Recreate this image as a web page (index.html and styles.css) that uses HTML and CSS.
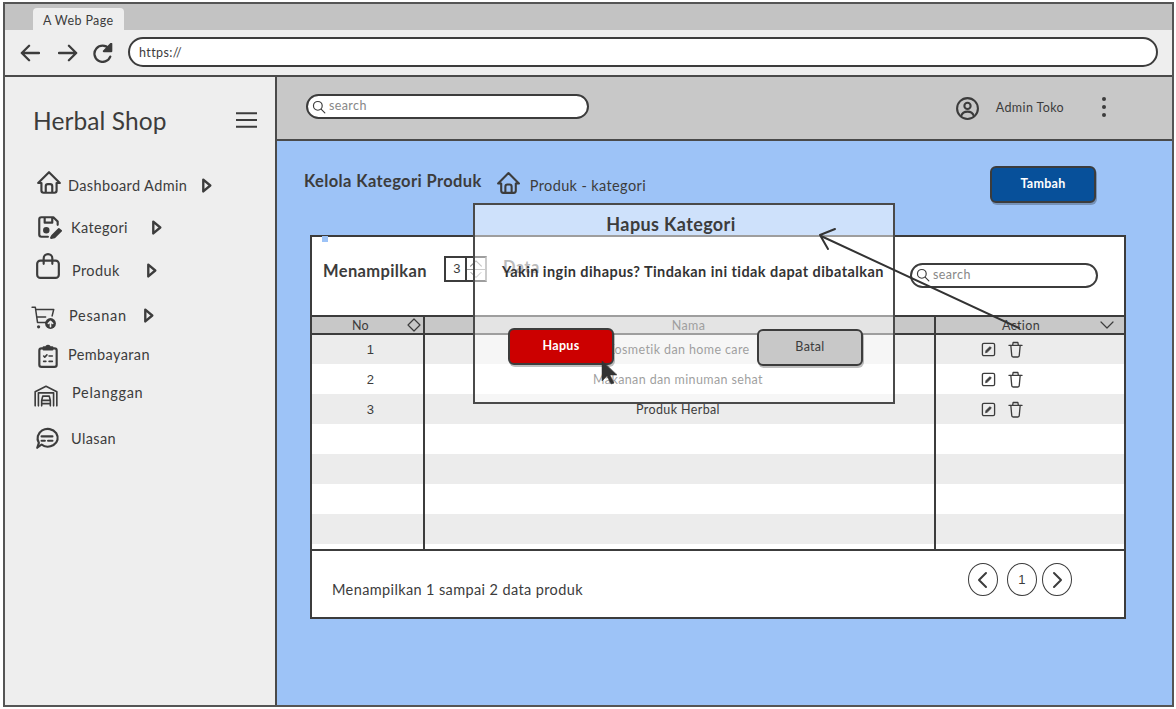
FILE: index.html
```html
<!DOCTYPE html>
<html lang="en">
<head>
  <meta charset="UTF-8">
  <meta name="viewport" content="width=device-width, initial-scale=1.0">
  <title>Herbal Shop - Kelola Kategori Produk</title>
  <link rel="stylesheet" href="styles.css">
</head>
<body>
  <svg class="sprite" xmlns="http://www.w3.org/2000/svg">
    <symbol id="i-home" viewBox="0 0 24 24"><path d="M5 12H2l10-10 10 10h-3M5 12v7a2 2 0 0 0 2 2h10a2 2 0 0 0 2-2v-7M9 21v-6a2 2 0 0 1 2-2h2a2 2 0 0 1 2 2v6"/></symbol>
    <symbol id="i-save" viewBox="0 0 24 24"><path d="M11 21H5a2 2 0 0 1-2-2V5a2 2 0 0 1 2-2h11l4 4v3M8 3v5h7V3"/><circle cx="9.500" cy="15" r="2" fill="currentColor"/><path d="M15 20l6-6 2 1.500-6 6-3 .5z" fill="currentColor"/></symbol>
    <symbol id="i-bag" viewBox="0 0 24 24"><path d="M5 7h14a3 3 0 0 1 3 3v10a3 3 0 0 1-3 3H5a3 3 0 0 1-3-3V10a3 3 0 0 1 3-3zM8 10V5a4 4 0 0 1 8 0v5"/></symbol>
    <symbol id="i-cart" viewBox="0 0 24 24"><path d="M1 3h3l2 14h8M4.500 5h16.500l-1.500 6M5.500 12h8" stroke-width="1.400"/><circle cx="7" cy="21" r="1.500" fill="currentColor" stroke="none"/><circle cx="18" cy="18" r="5" fill="currentColor" stroke="none"/><path d="M18 21v-5M16 18l2-2 2 2" stroke="#eee" stroke-width="1.500"/></symbol>
    <symbol id="i-clip" viewBox="0 0 24 24"><path d="M8 5H6a2 2 0 0 0-2 2v13a2 2 0 0 0 2 2h12a2 2 0 0 0 2-2V7a2 2 0 0 0-2-2h-2"/><path d="M8 6V4h2.500a1.500 1.500 0 0 1 3 0H16v2z" fill="currentColor"/><path d="M8 12l1 1 2-2M13 12h3M8 17h2M13 17h3" stroke-width="1.500"/></symbol>
    <symbol id="i-garage" viewBox="0 0 24 24"><path d="M2 22V9l10-5 10 5v13M5 22V10h14v12M8 22v-5l1-4h6l1 4v5M8 17h8M8 20h8" stroke-width="1.500"/></symbol>
    <symbol id="i-chat" viewBox="0 0 24 24"><path d="M3 21l1.500-4.500C2 12.500 3.500 7.500 7.500 5c4.500-2.500 10-1.500 13 2.500 2.500 4 1.500 8.500-2.500 11-3.500 2-8 2-11-.5z"/><path d="M7 10.500h10M7 14.500h3M13 14.500h4"/></symbol>
    <symbol id="i-search" viewBox="0 0 24 24"><circle cx="10" cy="10" r="7.500"/><path d="M16 16l6 6"/></symbol>
    <symbol id="i-user" viewBox="0 0 24 24"><circle cx="12" cy="12" r="10"/><circle cx="12" cy="9.500" r="3"/><path d="M6 19c1-3 3-4 6-4s5 1 6 4"/></symbol>
    <symbol id="i-edit" viewBox="0 0 16 16"><rect x="1.500" y="1.500" width="13" height="13" rx="1.500"/><path d="M5 11l.500-2 4-4 1.500 1.500-4 4z" fill="currentColor" stroke-width="1"/></symbol>
    <symbol id="i-trash" viewBox="0 0 16 18"><path d="M1 4.500h14M3 4.500l1 11a1.500 1.500 0 0 0 1.500 1.500h5a1.500 1.500 0 0 0 1.500-1.500l1-11M5 4l.500-2.500h5L11 4" stroke-width="1.400"/></symbol>
    <symbol id="i-play" viewBox="0 0 10 14"><path d="M2 1.500l6.500 5.500-6.500 5.500z" stroke-width="2.200"/></symbol>
  </svg>

  <div class="browser">
    <div class="tab-strip"><span class="tab">A Web Page</span></div>
    <div class="toolbar">
      <svg class="nav-ico" viewBox="0 0 22 22"><path d="M21 11H2M10 3l-8 8 8 8"/></svg>
      <svg class="nav-ico" viewBox="0 0 22 22"><path d="M1 11h19M12 3l8 8-8 8"/></svg>
      <svg class="nav-ico" viewBox="0 0 22 22"><path d="M19 15a9 9 0 1 1-1.500-9"/><path d="M20 1v8h-8z" fill="currentColor"/></svg>
      <div class="url">https://</div>
    </div>

    <div class="app">
      <aside class="sidebar">
        <div class="brand">
          <span>Herbal Shop</span>
          <svg class="burger" viewBox="0 0 22 18"><path d="M0 2h22M0 9h22M0 16h22"/></svg>
        </div>
        <nav class="menu">
          <a class="menu-item item-dash"><svg class="ico"><use href="#i-home"/></svg><span>Dashboard Admin</span><svg class="caret"><use href="#i-play"/></svg></a>
          <a class="menu-item item-kat"><svg class="ico"><use href="#i-save"/></svg><span>Kategori</span><svg class="caret"><use href="#i-play"/></svg></a>
          <a class="menu-item item-prod"><svg class="ico"><use href="#i-bag"/></svg><span>Produk</span><svg class="caret"><use href="#i-play"/></svg></a>
          <a class="menu-item item-pes"><svg class="ico"><use href="#i-cart"/></svg><span>Pesanan</span><svg class="caret"><use href="#i-play"/></svg></a>
          <a class="menu-item item-bayar"><svg class="ico"><use href="#i-clip"/></svg><span>Pembayaran</span></a>
          <a class="menu-item item-lgn"><svg class="ico"><use href="#i-garage"/></svg><span>Pelanggan</span></a>
          <a class="menu-item item-ulas"><svg class="ico"><use href="#i-chat"/></svg><span>Ulasan</span></a>
        </nav>
      </aside>

      <div class="main">
        <header class="topbar">
          <div class="search search-top"><svg class="search-ico"><use href="#i-search"/></svg><span>search</span></div>
          <div class="account">
            <svg class="user-ico"><use href="#i-user"/></svg>
            <span class="user-name">Admin Toko</span>
            <div class="dots"><i></i><i></i><i></i></div>
          </div>
        </header>

        <section class="content">
          <div class="page-head">
            <h1>Kelola Kategori Produk</h1>
            <svg class="crumb-ico"><use href="#i-home"/></svg>
            <span class="crumb">Produk - kategori</span>
            <button class="btn btn-add">Tambah</button>
          </div>

          <div class="card">
            <span class="handle"></span>
            <div class="card-top">
              <strong class="show-label">Menampilkan</strong>
              <div class="spinner">
                <span class="spin-val">3</span>
                <span class="spin-arrows">
                  <svg viewBox="0 0 20 12"><path d="M4 9l6-6 6 6"/></svg>
                  <svg viewBox="0 0 20 12"><path d="M4 3l6 6 6-6"/></svg>
                </span>
              </div>
              <strong class="data-label">Data</strong>
              <div class="search search-card"><svg class="search-ico"><use href="#i-search"/></svg><span>search</span></div>
            </div>

            <table class="grid">
              <colgroup><col class="col-no"><col><col class="col-act"></colgroup>
              <thead>
                <tr>
                  <th><span>No</span><svg class="sort" viewBox="0 0 14 14"><path d="M7 1l6 6-6 6-6-6z"/></svg></th>
                  <th class="th-name">Nama</th>
                  <th class="th-act"><span>Action</span><svg class="sort chev" viewBox="0 0 14 14"><path d="M1 4l6 6 6-6"/></svg></th>
                </tr>
              </thead>
              <tbody>
                <tr><td>1</td><td>Kosmetik dan home care</td><td><svg class="act-edit"><use href="#i-edit"/></svg><svg class="act-trash"><use href="#i-trash"/></svg></td></tr>
                <tr><td>2</td><td>Makanan dan minuman sehat</td><td><svg class="act-edit"><use href="#i-edit"/></svg><svg class="act-trash"><use href="#i-trash"/></svg></td></tr>
                <tr><td>3</td><td>Produk Herbal</td><td><svg class="act-edit"><use href="#i-edit"/></svg><svg class="act-trash"><use href="#i-trash"/></svg></td></tr>
                <tr><td></td><td></td><td></td></tr>
                <tr><td></td><td></td><td></td></tr>
                <tr><td></td><td></td><td></td></tr>
                <tr><td></td><td></td><td></td></tr>
                <tr class="row-tail"><td></td><td></td><td></td></tr>
              </tbody>
            </table>

            <div class="card-foot">
              <span>Menampilkan 1 sampai 2 data produk</span>
              <div class="pager">
                <span class="page-btn"><svg viewBox="0 0 14 18"><path d="M10 2L3 9l7 7"/></svg></span>
                <span class="page-btn page-num">1</span>
                <span class="page-btn"><svg viewBox="0 0 14 18"><path d="M4 2l7 7-7 7"/></svg></span>
              </div>
            </div>
          </div>
        </section>
      </div>
    </div>

    <div class="modal">
      <div class="modal-title">Hapus Kategori</div>
      <p class="modal-msg">Yakin ingin dihapus? Tindakan ini tidak dapat dibatalkan</p>
      <div class="modal-actions">
        <button class="btn btn-del">Hapus
          <svg class="cursor" viewBox="0 0 16 24"><path d="M1 0v20l5-5 4 8 3-1-4-8h7z"/></svg>
        </button>
        <button class="btn btn-cancel">Batal</button>
      </div>
    </div>

    <svg class="flow-arrow" viewBox="0 0 260 110"><path d="M204 102L6 10M20 3L5 9l8 14"/></svg>
  </div>
</body>
</html>
```

FILE: styles.css
```css
* { box-sizing: border-box; }
html, body { margin: 0; height: 100%; background: #fff; }
body {
  font-family: Lato, "Noto Sans", sans-serif;
  letter-spacing: .38px;
  color: #3c3c3c;
  padding: 2px 0 0 3px;
}
.sprite { width: 0; height: 0; position: absolute; }
svg { fill: none; stroke: currentColor; stroke-width: 2; stroke-linecap: round; stroke-linejoin: round; display: block; }

.browser {
  position: relative;
  width: 1171px; height: 705px;
  border: 2px solid #555;
  background: #eee;
  display: flex;
  flex-direction: column;
}

/* browser chrome */
.tab-strip {
  height: 26px;
  background: #c3c3c3;
  padding: 4px 0 0 28px;
}
.tab {
  display: block;
  width: 91px; height: 22px;
  background: #eee;
  border-radius: 4px 4px 0 0;
  font-size: 12.500px;
  line-height: 25px;
  padding-left: 10px;
}
.toolbar {
  height: 47px;
  border-bottom: 2px solid #4a4a4a;
  display: flex;
  align-items: center;
  padding: 0 14px 0 15px;
}
.nav-ico { width: 20px; height: 20px; margin-right: 18px; stroke-width: 2.500; }
.nav-ico:nth-child(2) { margin-right: 15px; }
.nav-ico:nth-child(3) { margin-right: 15px; }
.url {
  flex: 1;
  height: 30px;
  margin-bottom: 2px;
  background: #fff;
  border: 2px solid #3c3c3c;
  border-radius: 15px;
  font-size: 12.500px;
  line-height: 28px;
  padding-left: 9px;
}

.app { flex: 1; display: flex; min-height: 0; }

/* sidebar */
.sidebar {
  width: 272px;
  border-right: 2px solid #4a4a4a;
  padding: 0 18px 0 28px;
}
.brand {
  display: flex;
  align-items: center;
  justify-content: space-between;
  height: 60px;
  margin-top: 13px;
  font-size: 24.500px;
  letter-spacing: .1px;
}
.burger { width: 21px; height: 18px; }
.menu { margin-top: 22px; }
.menu-item { display: flex; align-items: center; font-size: 14.500px; height: 26px; }
.menu-item .ico { width: 26px; height: 26px; flex: none; }
.caret { width: 11px; height: 15px; margin-left: 14px; }
.item-dash { margin-left: 3px; }
.item-dash .ico { margin-bottom: 4px; }
.item-dash span { margin-left: 6px; }
.item-kat { margin: 16px 0 0 3px; }
.item-kat span { margin-left: 9px; }
.item-kat .caret { margin-left: 23px; }
.item-prod { margin: 17px 0 0 2px; }
.item-prod .ico { margin-bottom: 9px; }
.item-prod span { margin-left: 11px; }
.item-prod .caret { margin-left: 26px; }
.item-pes { margin: 19px 0 0 -2px; }
.item-pes .ico { margin-top: 4px; }
.item-pes span { margin-left: 12px; letter-spacing: .7px; }
.item-pes .caret { margin-left: 16px; }
.item-bayar { margin: 13px 0 0 2px; }
.item-bayar .ico { margin-top: 4px; }
.item-bayar span { margin-left: 7px; }
.item-lgn { margin: 12px 0 0 0; }
.item-lgn .ico { margin-top: 6px; }
.item-lgn span { margin-left: 13px; letter-spacing: .7px; }
.item-ulas { margin: 20px 0 0 1px; }
.item-ulas span { margin-left: 11px; }

/* top bar */
.main { flex: 1; display: flex; flex-direction: column; min-width: 0; }
.topbar {
  height: 64px;
  background: #c8c8c8;
  border-bottom: 2px solid #4a4a4a;
  display: flex;
  padding: 17px 0 0 29px;
}
.search {
  display: flex;
  align-items: center;
  background: #fff;
  border: 2px solid #3c3c3c;
  border-radius: 13px;
  font-size: 12.500px;
  color: #888;
  padding-left: 4px;
}
.search span { margin-bottom: 2px; }
.search-ico { width: 14px; height: 14px; color: #3c3c3c; margin-right: 3px; }
.search-top { width: 283px; height: 25px; }
.account { margin-left: auto; display: flex; align-items: center; height: 29px; padding-right: 66px; }
.user-ico { width: 25px; height: 25px; }
.user-name { font-size: 12.500px; margin: 0 38px 2px 16px; }
.dots { display: flex; flex-direction: column; gap: 4px; margin-bottom: 3px; }
.dots i { display: block; width: 4px; height: 4px; border-radius: 50%; background: #3c3c3c; }

/* content */
.content { flex: 1; background: #9dc3f7; padding: 25px 46px 0 27px; }
.page-head { display: flex; align-items: center; height: 37px; padding-right: 30px; }
.page-head h1 { margin: 0 14px 8px 0; font-size: 16.500px; font-weight: 700; }
.crumb-ico { width: 25px; height: 25px; margin: 0 9px 3px 0; }
.crumb { font-size: 14.500px; margin-top: 1px; }
.btn {
  display: block;
  width: 106px; height: 37px;
  border: 2px solid #3c3c3c;
  border-radius: 6px;
  font: 700 12.500px Lato, "Noto Sans", sans-serif;
  letter-spacing: .3px;
  box-shadow: 1px 2px 0 rgba(0, 0, 0, .25);
}
.btn-add { margin-left: auto; background: #07509a; color: #fff; padding-bottom: 3px; }

.card {
  position: relative;
  margin: 32px 0 0 6px;
  height: 384px;
  background: #fff;
  border: 2px solid #3c3c3c;
  display: flex;
  flex-direction: column;
}
.handle { position: absolute; left: 10px; top: -1px; width: 6px; height: 6px; background: #9dc3f7; }
.card-top { height: 78px; display: flex; align-items: center; padding: 0 26px 10px 11px; }
.show-label { font-size: 16.500px; margin-right: 17px; }
.spinner { display: flex; width: 43px; height: 26px; margin: 0 16px 4px 0; border: 2px solid #3c3c3c; border-right-color: #999; font: 13px "Liberation Sans", sans-serif; }
.spin-val { width: 21px; padding-left: 3px; text-align: center; line-height: 22px; border-right: 2px solid #3c3c3c; }
.spin-arrows { flex: 1; display: flex; flex-direction: column; color: #888; }
.spin-arrows svg { width: 100%; height: 11px; stroke-width: 1.200; }
.spin-arrows svg + svg { border-top: 1px solid #999; }
.data-label { font-size: 16.500px; color: #777; margin-bottom: 8px; }
.search-card { margin: 8px 0 0 auto; width: 188px; height: 25px; }

.grid { width: 100%; height: 233px; table-layout: fixed; border-collapse: collapse; border-bottom: 2px solid #3c3c3c; font-size: 12.500px; }
.col-no { width: 112px; }
.col-act { width: 189px; }
.grid th {
  position: relative;
  height: 18px;
  padding: 0;
  background: #c8c8c8;
  border-top: 2px solid #3c3c3c;
  border-bottom: 2px solid #3c3c3c;
  font-weight: 400;
}
.grid td { height: 30px; padding: 0; text-align: center; }
.grid th + th, .grid td + td { border-left: 2px solid #3c3c3c; }
.grid td:first-child { font-family: "Liberation Sans", sans-serif; font-size: 13px; padding-left: 6px; }
.grid td:nth-child(2) { padding-right: 3px; }
.grid tbody tr:nth-child(odd) { background: #ececec; }
.grid .row-tail td { height: 6px; }
.grid th:first-child span { margin-right: 14px; }
.th-name { padding-left: 18px !important; }
.th-act span { margin-right: 18px; }
.sort { position: absolute; right: 2px; top: 1px; width: 14px; height: 14px; stroke-width: 1.200; }
.chev { right: 10px; }
.grid td svg { display: inline-block; vertical-align: middle; }
.act-edit { width: 15px; height: 15px; stroke-width: 1.400; margin-right: 12px; }
.act-trash { width: 15px; height: 17px; margin-right: 56px; }

.card-foot { flex: 1; display: flex; align-items: center; justify-content: space-between; padding: 0 52px 0 20px; font-size: 14.500px; }
.card-foot > span { margin-top: 11px; }
.pager { display: flex; gap: 8px; margin-bottom: 9px; }
.page-btn { width: 30px; height: 33px; border: 1.500px solid #3c3c3c; border-radius: 50%; display: flex; align-items: center; justify-content: center; }
.page-btn svg { width: 14px; height: 18px; stroke-width: 2; }
.page-num { font: 13px "Liberation Sans", sans-serif; margin: 0 -3px 0 1px; }

/* dialog over the table */
.modal {
  position: absolute;
  left: 468px; top: 199px;
  width: 422px; height: 201px;
  background: rgba(255, 255, 255, .5);
  border: 2px solid #4a4a4a;
}
.modal-title { height: 30px; padding-right: 26px; text-align: center; font-size: 18px; font-weight: 700; line-height: 38px; }
.modal-msg { margin: 28px 0 0; padding-left: 27px; font-size: 14.500px; font-weight: 700; letter-spacing: .43px; color: #333; white-space: nowrap; }
.modal-actions { display: flex; justify-content: space-between; padding: 0 30px 0 33px; margin-top: 48px; }
.btn-del { position: relative; background: #cc0000; color: #fff; padding-bottom: 4px; }
.btn-cancel { background: #c8c8c8; color: #3c3c3c; font-weight: 400; margin-top: 1px; padding-bottom: 4px; }
.cursor { position: absolute; left: 91px; top: 31px; width: 16px; height: 24px; fill: #333; stroke: #333; stroke-width: .5; }
.flow-arrow { position: absolute; left: 810px; top: 222px; width: 260px; height: 110px; color: #333; stroke-width: 2; }
```
